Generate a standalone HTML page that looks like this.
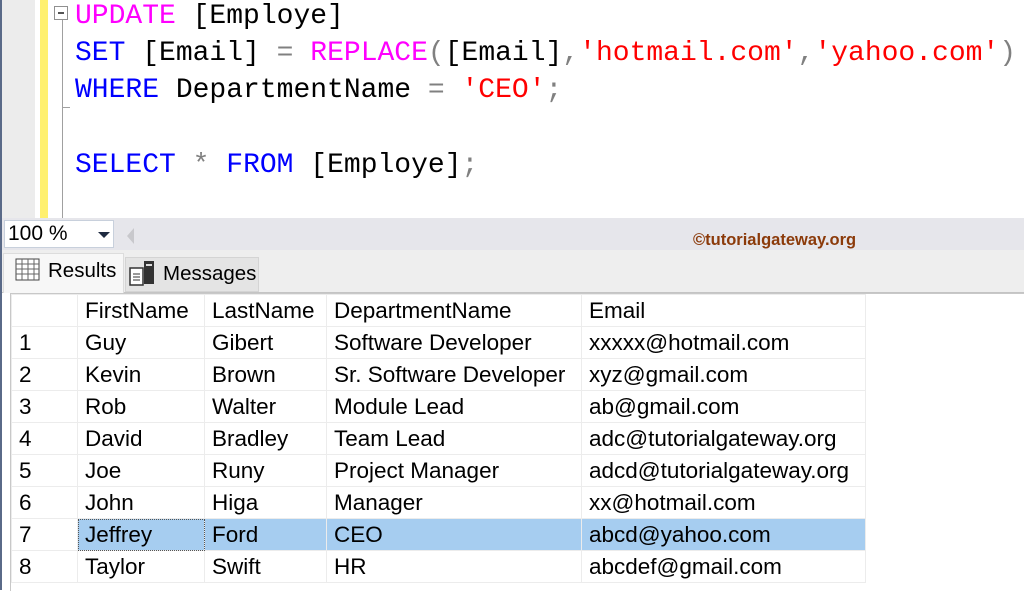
<!DOCTYPE html>
<html><head><style>
body{margin:0;width:1024px;height:590px;overflow:hidden;background:#fff;position:relative;font-family:"Liberation Sans",sans-serif}
.a{position:absolute}
.code{font-family:"Liberation Mono",monospace;font-size:28px;white-space:pre;left:75px;line-height:37px}
.k{color:#0000ff}.m{color:#ff00ff}.s{color:#ff0000}.g{color:#808080}
table{border-collapse:collapse;font-size:22.5px;color:#000}
td{border:1px solid #ececec;height:31px;padding:0 0 0 7px;white-space:nowrap;vertical-align:middle;line-height:31px}
</style></head><body>
<div class="a" style="left:0;top:0;width:2px;height:590px;background:#5a6a88"></div>
<div class="a" style="left:2px;top:0;width:33px;height:218px;background:#ececec"></div>
<div class="a" style="left:40px;top:0;width:8px;height:218px;background:#fff06e"></div>
<div class="a" style="left:62px;top:20px;width:1px;height:198px;background:#a0a0a0"></div>
<div class="a" style="left:62px;top:107px;width:8px;height:1px;background:#a0a0a0"></div>
<div class="a" style="left:54px;top:6px;width:14px;height:14px;border:1px solid #909090;box-sizing:border-box;background:#fff"><div class="a" style="left:3px;top:5px;width:6px;height:1.5px;background:#555"></div></div>
<div class="a code" style="top:-2px"><span class="m">UPDATE</span> [Employe]</div>
<div class="a code" style="top:35px"><span class="k">SET</span> [Email] <span class="g">=</span> <span class="m">REPLACE</span><span class="g">(</span>[Email]<span class="g">,</span><span class="s">'hotmail.com'</span><span class="g">,</span><span class="s">'yahoo.com'</span><span class="g">)</span></div>
<div class="a code" style="top:72px"><span class="k">WHERE</span> DepartmentName <span class="g">=</span> <span class="s">'CEO'</span><span class="g">;</span></div>
<div class="a code" style="top:147px"><span class="k">SELECT</span> <span class="g">*</span> <span class="k">FROM</span> [Employe]<span class="g">;</span></div>
<div class="a" style="left:2px;top:218px;width:1022px;height:32px;background:#e6e6eb"></div>
<div class="a" style="left:4px;top:220px;width:110px;height:28px;background:#fff;border:1px solid #c8d0dc;box-sizing:border-box;font-size:21px;line-height:26px;padding-left:3px">100 %</div>
<div class="a" style="left:98px;top:232px;border-left:6px solid transparent;border-right:6px solid transparent;border-top:6px solid #1e2a40"></div>
<div class="a" style="left:127px;top:228px;border-top:8px solid transparent;border-bottom:8px solid transparent;border-right:7px solid #c8c8cc"></div>
<div class="a" style="left:693px;top:231px;font-size:16.5px;font-weight:bold;color:#8b3a0a">©tutorialgateway.org</div>
<div class="a" style="left:2px;top:250px;width:1022px;height:43px;background:#eeeeee;border-bottom:1px solid #c4c4c4;box-sizing:border-box"></div>
<div class="a" style="left:3px;top:253px;width:121px;height:40px;background:#f7f7f7;border:1px solid #dcdcdc;border-bottom:none;box-sizing:border-box"></div>
<svg class="a" style="left:15px;top:258px" width="26" height="24"><rect x="1" y="1" width="23" height="21" fill="#fff" stroke="#444"/><g stroke="#666"><line x1="1" y1="6" x2="24" y2="6"/><line x1="1" y1="11" x2="24" y2="11"/><line x1="1" y1="16" x2="24" y2="16"/><line x1="7" y1="1" x2="7" y2="22"/><line x1="13" y1="1" x2="13" y2="22"/><line x1="19" y1="1" x2="19" y2="22"/></g></svg>
<div class="a" style="left:48px;top:259px;font-size:20.5px">Results</div>
<div class="a" style="left:125px;top:257px;width:134px;height:35px;background:#e4e4e4;border:1px solid #d4d4d4;box-sizing:border-box"></div>
<svg class="a" style="left:128px;top:260px" width="28" height="28"><rect x="2" y="8" width="13" height="17" fill="#fff" stroke="#333" stroke-width="1.5"/><g stroke="#333"><line x1="5" y1="14" x2="12" y2="14"/><line x1="5" y1="17" x2="12" y2="17"/><line x1="5" y1="20" x2="12" y2="20"/></g><rect x="16" y="1" width="10" height="23" fill="#333"/><rect x="18" y="4" width="6" height="2" fill="#ddd"/></svg>
<div class="a" style="left:163px;top:262px;font-size:20.5px">Messages</div>
<div class="a" style="left:10px;top:293px;width:1014px;height:297px;border-left:1px solid #c8c8c8;border-top:1px solid #c8c8c8"></div>
<table class="a" style="left:11px;top:294px">
<tr><td style="width:58px"></td><td style="width:119px">FirstName</td><td style="width:114px">LastName</td><td style="width:247px">DepartmentName</td><td style="width:276px">Email</td></tr>
<tr><td>1</td><td>Guy</td><td>Gibert</td><td>Software Developer</td><td>xxxxx@hotmail.com</td></tr>
<tr><td>2</td><td>Kevin</td><td>Brown</td><td>Sr. Software Developer</td><td>xyz@gmail.com</td></tr>
<tr><td>3</td><td>Rob</td><td>Walter</td><td>Module Lead</td><td>ab@gmail.com</td></tr>
<tr><td>4</td><td>David</td><td>Bradley</td><td>Team Lead</td><td>adc@tutorialgateway.org</td></tr>
<tr><td>5</td><td>Joe</td><td>Runy</td><td>Project Manager</td><td>adcd@tutorialgateway.org</td></tr>
<tr><td>6</td><td>John</td><td>Higa</td><td>Manager</td><td>xx@hotmail.com</td></tr>
<tr style="background:#a6cdf0"><td style="background:#fff">7</td><td style="outline:1px dotted #555;outline-offset:-1px">Jeffrey</td><td>Ford</td><td>CEO</td><td>abcd@yahoo.com</td></tr>
<tr><td>8</td><td>Taylor</td><td>Swift</td><td>HR</td><td>abcdef@gmail.com</td></tr>
</table>
</body></html>
